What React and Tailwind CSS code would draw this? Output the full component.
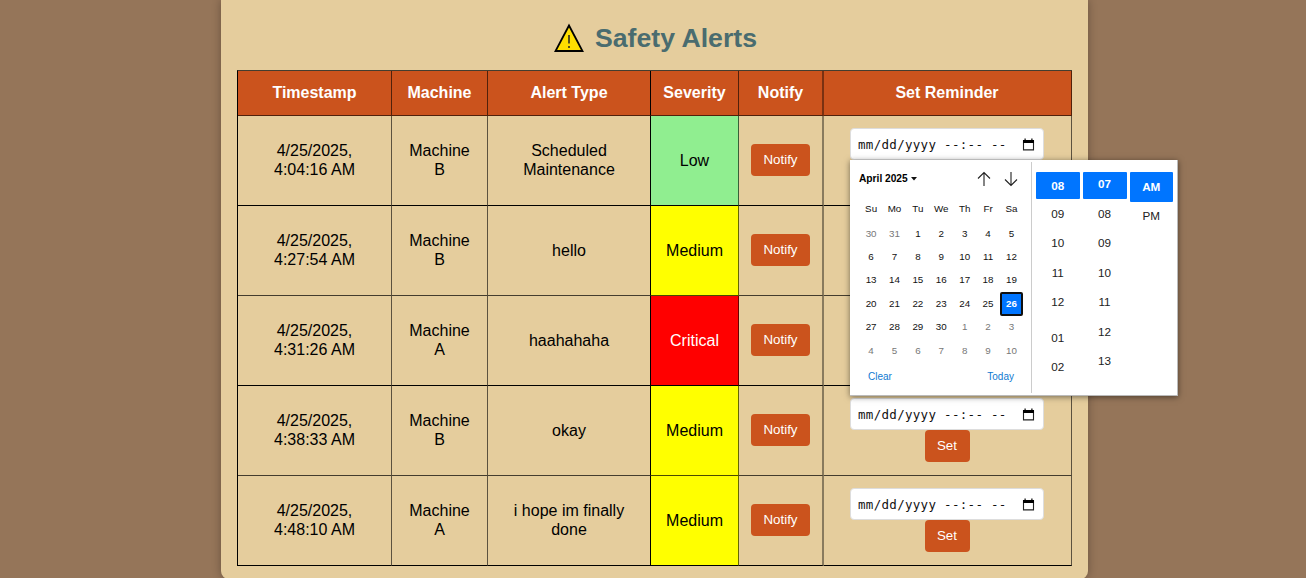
import React from "react";

const ROWS = [
  { time: "4:04:16 AM", machine: "B", type: ["Scheduled", "Maintenance"], severity: "Low", input: true, set: false },
  { time: "4:27:54 AM", machine: "B", type: ["hello"], severity: "Medium", input: false, set: false },
  { time: "4:31:26 AM", machine: "A", type: ["haahahaha"], severity: "Critical", input: false, set: false },
  { time: "4:38:33 AM", machine: "B", type: ["okay"], severity: "Medium", input: true, set: true },
  { time: "4:48:10 AM", machine: "A", type: ["i hope im finally", "done"], severity: "Medium", input: true, set: true },
];

const SEVERITY = {
  Low: "bg-[#90ee90] text-black",
  Medium: "bg-[#ffff00] text-black",
  Critical: "bg-[#ff0000] text-white",
};

const LINES = ["border-b-black", "border-b-black/70", "border-b-black", "border-b-black/70", "border-b-black"];

const GRID = "grid grid-cols-[154px_96px_163px_88px_85px_248px]";

const BUTTON = "h-8 rounded-[4px] bg-[#cb531d] pb-px text-[13.33px] text-white";

function Cell({ className = "", right = "border-r border-r-black/60", bottom = "border-b-black", children }) {
  return (
    <div className={`flex flex-col items-center justify-center border-b pb-px text-center ${right} ${bottom} ${className}`}>
      {children}
    </div>
  );
}

function DateInput() {
  return (
    <div className="flex h-8 w-[194px] shrink-0 items-center justify-between rounded-[4px] border border-[#ddd] bg-white pl-[7px] pr-[8px]">
      <span className="whitespace-pre pt-[2px] font-['DejaVu_Sans_Mono',monospace] text-[12.5px] leading-4 tracking-[0.3px] text-[#111]">mm/dd/yyyy --:-- --</span>
      <svg width="13" height="13" viewBox="0 0 13 13" fill="none">
        <path d="M1.5 2.5h10v9.4h-10z" stroke="#222" strokeWidth="1.1" />
        <path d="M1 2h11v3H1zM2.5 0.5h1.2V2H2.5zM9.3 0.5h1.2V2H9.3z" fill="#000" />
      </svg>
    </div>
  );
}

const DAYS = ["Su", "Mo", "Tu", "We", "Th", "Fr", "Sa"];
const DATES = [30, 31, ...Array.from({ length: 30 }, (_, i) => i + 1), ...Array.from({ length: 10 }, (_, i) => i + 1)];

function Arrow({ down }) {
  return (
    <svg width="14" height="16" viewBox="0 0 14 16" fill="none" stroke="#222" strokeWidth="1.1" className={down ? "rotate-180" : ""}>
      <path d="M7 15V1.5M1 7.5l6-6 6 6" />
    </svg>
  );
}

function Calendar() {
  return (
    <div className="flex h-full w-[181px] flex-col text-[9.8px] leading-4 text-[#111]">
      <div className="flex h-[38px] items-center pl-[9px] pr-[13px]">
        <span className="text-[10.2px] font-bold text-black">April 2025</span>
        <svg width="6" height="4" viewBox="0 0 6 4" className="ml-[3px]"><path d="M0 0h6L3 3.5z" fill="#111" /></svg>
        <div className="ml-auto flex gap-[13px]">
          <Arrow />
          <Arrow down />
        </div>
      </div>
      <div className="grid grid-cols-[repeat(7,23.4px)] pl-[9.4px] text-center">
        {DAYS.map((d) => <span key={d} className="flex h-6 items-center justify-center pb-[2px]">{d}</span>)}
      </div>
      <div className="grid grid-cols-[repeat(7,23.4px)] auto-rows-[23.4px] pl-[9.4px]">
        {DATES.map((d, i) => {
          const selected = i === 27;
          const muted = i < 2 || i > 31;
          return (
            <span key={i} className={`flex items-center justify-center ${muted ? "text-[#777]" : ""} ${selected ? "rounded-[2px] border-2 border-[#101010] bg-[#0075ff] font-bold text-white" : ""}`}>{d}</span>
          );
        })}
      </div>
      <div className="flex justify-between pl-[18px] pr-[17px] pt-[7.5px] text-[10px] leading-[14px] text-[#0f7ad1]">
        <span>Clear</span>
        <span>Today</span>
      </div>
    </div>
  );
}

function Picker() {
  return (
    <div className="absolute left-[850px] top-[160px] flex h-[236px] w-[328px] border-r border-b border-[#bbb] bg-white shadow-[0_1px_6px_rgba(0,0,0,0.5)]">
      <Calendar />
      <div className="mt-[2px] mb-[2px] w-px bg-[#ccc]" />
      <div className="flex gap-[3px] pl-[4px] pt-[12px] text-[11.7px] text-[#222]">
        <div className="flex w-[43.5px] flex-col text-center">
          <b className="flex h-[27px] items-center justify-center rounded-[1px] bg-[#0075ff] text-white">08</b>
          {["09", "10", "11", "12"].map((n) => <span key={n} className="h-[29.4px] leading-[29.4px]">{n}</span>)}
          <span className="mt-[6px] h-[29.6px] leading-[29.6px]">01</span>
          <span className="h-[29.6px] leading-[29.6px]">02</span>
        </div>
        <div className="flex w-[44px] flex-col text-center">
          <b className="flex h-[27px] items-center justify-center rounded-[1px] bg-[#0075ff] pb-[3px] text-white">07</b>
          {["08", "09", "10", "11", "12", "13"].map((n) => <span key={n} className="h-[29.4px] leading-[29.4px]">{n}</span>)}
        </div>
        <div className="flex w-[43.5px] flex-col text-center">
          <b className="flex h-[30px] items-center justify-center rounded-[1px] bg-[#0075ff] pb-px text-white">AM</b>
          <span className="h-[28px] leading-[28px]">PM</span>
        </div>
      </div>
    </div>
  );
}

export default function App() {
  return (
    <div className="relative flex h-[578px] w-[1306px] justify-center overflow-hidden bg-[#957559] pl-[3px] font-['Liberation_Sans',Arial,sans-serif] text-black">
      <div className="h-[579px] w-[867px] rounded-b-[8px] bg-[#e5cd9d] px-4 shadow-[0_0_10px_rgba(0,0,0,0.3)]">
        <h1 className="flex h-[70px] items-center justify-center gap-[11px] pl-[2px] pt-[6px] text-[26.67px] font-bold text-[#4a6c6f]">
          <svg width="30" height="30" viewBox="0 0 30 30">
            <path d="M15 2.5L28.5 28h-27z" fill="#ffde00" stroke="#000" strokeWidth="1.8" />
            <path d="M15 12v8.500M15 23v2" stroke="#222" strokeWidth="1.5" />
          </svg>
          <span>Safety Alerts</span>
        </h1>
        <div className="w-[835px] border-l border-t border-l-black border-t-black/70 text-[16px] leading-[19px]">
          <div className={`${GRID} h-[45px] bg-[#cb531d] font-bold text-white`}>
            <Cell bottom="border-b-black/60">Timestamp</Cell>
            <Cell bottom="border-b-black/60">Machine</Cell>
            <Cell bottom="border-b-black/60" right="border-r border-r-black">Alert Type</Cell>
            <Cell bottom="border-b-black/60">Severity</Cell>
            <Cell bottom="border-b-black/60" right="border-r-2 border-r-black/40">Notify</Cell>
            <Cell bottom="border-b-black/60" className="pr-px">Set Reminder</Cell>
          </div>
          {ROWS.map((r, i) => (
            <div key={i} className={`${GRID} h-[90px]`}>
              <Cell bottom={LINES[i]}><span>4/25/2025,</span><span>{r.time}</span></Cell>
              <Cell bottom={LINES[i]}><span>Machine</span><span>{r.machine}</span></Cell>
              <Cell bottom={LINES[i]} right="border-r border-r-black">{r.type.map((t) => <span key={t}>{t}</span>)}</Cell>
              <Cell bottom={LINES[i]} className={SEVERITY[r.severity]}>{r.severity}</Cell>
              <Cell bottom={LINES[i]} right="border-r-2 border-r-black/40"><button className={`${BUTTON} w-[59px]`}>Notify</button></Cell>
              <Cell bottom={LINES[i]} className="pr-px">
                <div className="h-8">{r.input && <DateInput />}</div>
                <div className="h-8">{r.set && <button className={`${BUTTON} block w-[45px]`}>Set</button>}</div>
              </Cell>
            </div>
          ))}
        </div>
      </div>
      <Picker />
    </div>
  );
}
